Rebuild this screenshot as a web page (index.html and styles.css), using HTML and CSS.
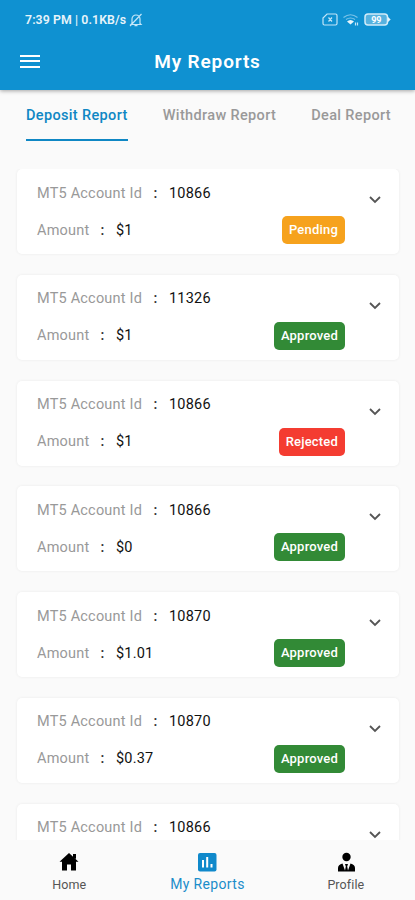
FILE: index.html
```html
<!DOCTYPE html>
<html lang="en">
<head>
  <meta charset="UTF-8">
  <meta name="viewport" content="width=device-width, initial-scale=1.0">
  <title>My Reports</title>
  <link rel="stylesheet" href="styles.css">
</head>
<body>
  <header class="header">
    <div class="status-bar">
      <span class="status-text">7:39 PM | 0.1KB/s</span>
      <svg class="bell" viewBox="0 0 14 14" width="14" height="14">
        <path d="M3 10.5V6a4 4 0 0 1 8 0v4.500l1 1H2zM5.500 12.700h3M1 13L12.500 1"/>
      </svg>
      <div class="status-icons">
        <svg viewBox="0 0 16 13" width="16" height="13">
          <path d="M5 1h8.500a1.500 1.500 0 0 1 1.500 1.500v8a1.500 1.500 0 0 1-1.500 1.500h-11A1.500 1.500 0 0 1 1 10.500V5zM6.500 4.500l3.500 4M10 4.500l-3.500 4"/>
        </svg>
        <svg class="wifi" viewBox="0 0 16 13" width="16" height="13">
          <path class="faint" d="M.5 4.500q7-5.500 14 0M3 6.500q4.500-3 9 0"/>
          <path class="solid" d="M4 8.500q3.500-3 7 0L7.500 11.500z"/>
          <path d="M12.500 9.500v3M14.500 9.500v3"/>
        </svg>
        <svg class="battery" viewBox="0 0 27 13" width="27" height="13">
          <rect x="1" y="1" width="22.500" height="11" rx="3"/>
          <path class="solid" d="M24 4l2.700 2.500L24 9z"/>
          <text x="12.300" y="9.800" text-anchor="middle">99</text>
        </svg>
      </div>
    </div>
    <div class="app-bar">
      <div class="menu"><span></span><span></span><span></span></div>
      <h1>My Reports</h1>
    </div>
  </header>

  <nav class="tabs">
    <span class="tab active">Deposit Report</span>
    <span class="tab">Withdraw Report</span>
    <span class="tab">Deal Report</span>
  </nav>

  <main class="list">
    <div class="card">
      <div class="row"><span class="label">MT5 Account Id</span><span class="colon">:</span><span class="value">10866</span></div>
      <div class="row"><span class="label amount">Amount</span><span class="colon">:</span><span class="value">$1</span><span class="badge pending">Pending</span></div>
      <svg class="chevron" viewBox="0 0 12 8"><path d="M1 1l5 5 5-5"/></svg>
    </div>
    <div class="card">
      <div class="row"><span class="label">MT5 Account Id</span><span class="colon">:</span><span class="value">11326</span></div>
      <div class="row"><span class="label amount">Amount</span><span class="colon">:</span><span class="value">$1</span><span class="badge approved">Approved</span></div>
      <svg class="chevron" viewBox="0 0 12 8"><path d="M1 1l5 5 5-5"/></svg>
    </div>
    <div class="card">
      <div class="row"><span class="label">MT5 Account Id</span><span class="colon">:</span><span class="value">10866</span></div>
      <div class="row"><span class="label amount">Amount</span><span class="colon">:</span><span class="value">$1</span><span class="badge rejected">Rejected</span></div>
      <svg class="chevron" viewBox="0 0 12 8"><path d="M1 1l5 5 5-5"/></svg>
    </div>
    <div class="card">
      <div class="row"><span class="label">MT5 Account Id</span><span class="colon">:</span><span class="value">10866</span></div>
      <div class="row"><span class="label amount">Amount</span><span class="colon">:</span><span class="value">$0</span><span class="badge approved">Approved</span></div>
      <svg class="chevron" viewBox="0 0 12 8"><path d="M1 1l5 5 5-5"/></svg>
    </div>
    <div class="card">
      <div class="row"><span class="label">MT5 Account Id</span><span class="colon">:</span><span class="value">10870</span></div>
      <div class="row"><span class="label amount">Amount</span><span class="colon">:</span><span class="value">$1.01</span><span class="badge approved">Approved</span></div>
      <svg class="chevron" viewBox="0 0 12 8"><path d="M1 1l5 5 5-5"/></svg>
    </div>
    <div class="card">
      <div class="row"><span class="label">MT5 Account Id</span><span class="colon">:</span><span class="value">10870</span></div>
      <div class="row"><span class="label amount">Amount</span><span class="colon">:</span><span class="value">$0.37</span><span class="badge approved">Approved</span></div>
      <svg class="chevron" viewBox="0 0 12 8"><path d="M1 1l5 5 5-5"/></svg>
    </div>
    <div class="card">
      <div class="row"><span class="label">MT5 Account Id</span><span class="colon">:</span><span class="value">10866</span></div>
      <svg class="chevron" viewBox="0 0 12 8"><path d="M1 1l5 5 5-5"/></svg>
    </div>
  </main>

  <footer class="bottom-nav">
    <div class="nav-item">
      <svg viewBox="0 0 20 20" width="20" height="20">
        <path d="M10 1l9.500 8.700h-2.500V18.500h-5v-6H8v6H3V9.700H.5zM14 2h3v5l-3-2z"/>
      </svg>
      <span>Home</span>
    </div>
    <div class="nav-item active">
      <svg viewBox="0 0 20 20" width="20" height="20">
        <rect x="1" y="1" width="18.500" height="18.500" rx="2"/>
        <path class="bars" d="M5 8h2v7.500H5zM9.200 5h2v10.500h-2zM13.500 12h2v3.500h-2z"/>
      </svg>
      <span>My Reports</span>
    </div>
    <div class="nav-item">
      <svg viewBox="0 0 20 20" width="20" height="20">
        <circle cx="10.500" cy="5" r="4.200"/>
        <path d="M2 19.500V16q0-3.200 4.500-4.500l2.500 7 .8-4-.8-2.500h3l-.8 2.500.8 4 2.500-7q4.500 1.300 4.500 4.500v3.500z"/>
      </svg>
      <span>Profile</span>
    </div>
  </footer>
</body>
</html>
```
FILE: styles.css
```css
* { box-sizing: border-box; }
body {
  margin: 0;
  height: 900px;
  display: flex;
  flex-direction: column;
  overflow: hidden;
  background: #fafafa;
  font-family: Roboto, "Liberation Sans", sans-serif;
  color: #111;
}
.header {
  height: 90px;
  flex-shrink: 0;
  background: #0f91d1;
  color: #fff;
  box-shadow: 0 1px 4px rgba(0, 0, 0, 0.35);
}
.status-bar {
  display: flex;
  align-items: center;
  height: 39px;
  padding: 0 24px 0 25px;
}
.status-text { font-size: 12.300px; font-weight: 600; letter-spacing: 0.100px; opacity: 0.9; }
.status-bar svg { fill: none; stroke: #c4e6f8; stroke-width: 1.200; }
.status-bar .bell { margin-left: 3px; }
.status-icons { display: flex; gap: 5px; margin-left: auto; }
.status-icons .faint { stroke: #7cc3e8; }
.status-bar .solid { fill: #e8f5fc; stroke: none; }
.battery rect { fill: #57b2df; stroke: #d2ecf9; stroke-width: 1.500; }
.battery text { fill: #fff; stroke: none; font-size: 9px; font-weight: 700; }
.app-bar {
  display: grid;
  grid-template-columns: 60px 1fr 60px;
  align-items: center;
  height: 44px;
}
.menu { display: flex; flex-direction: column; gap: 3.500px; margin-left: 20px; width: 20px; }
.menu span { height: 2px; background: #fff; }
h1 { margin: 0; text-align: center; font-size: 19px; font-weight: 600; letter-spacing: 0.850px; }

.tabs {
  display: flex;
  justify-content: space-between;
  flex-shrink: 0;
  height: 79px;
  padding: 0 24px 0 26px;
}
.tab {
  height: 51px;
  padding-top: 17px;
  font-size: 14.500px;
  line-height: 18px;
  font-weight: 500;
  letter-spacing: 0.350px;
  color: #999;
}
.tab.active { color: #0f87c4; border-bottom: 2px solid #0f87c4; }

.list {
  flex: 1;
  min-height: 0;
  overflow: hidden;
  padding: 0 16px 0 17px;
}
.card {
  display: grid;
  grid-template-columns: 1fr 20px;
  grid-template-rows: 28px 28px;
  row-gap: 9px;
  height: 85px;
  margin-bottom: 20.800px;
  padding: 10px 14px 10px 20px;
  background: #fff;
  border-radius: 5px;
  box-shadow: 0 0 3px rgba(0, 0, 0, 0.07);
}
.row { grid-column: 1; display: flex; align-items: center; font-size: 14.500px; }
.label { width: 105px; color: #999; letter-spacing: 0.200px; white-space: nowrap; }
.label.amount { width: 52px; }
.colon { width: 27px; text-align: center; font-weight: 500; color: #333; }
.value { letter-spacing: 0.200px; }
.badge {
  margin-left: auto;
  margin-right: 20px;
  padding: 0 7px;
  border-radius: 5px;
  color: #fff;
  font-size: 13px;
  line-height: 28px;
  font-weight: 500;
  letter-spacing: 0.200px;
}
.pending { background: #f6a21d; }
.approved { background: #328a36; }
.rejected { background: #f43c31; }
.chevron {
  grid-column: 2;
  grid-row: 1;
  align-self: end;
  justify-self: center;
  width: 12px;
  height: 8px;
  margin-bottom: 3px;
  fill: none;
  stroke: #555;
  stroke-width: 1.800;
}

.bottom-nav {
  display: grid;
  grid-template-columns: repeat(3, 1fr);
  flex-shrink: 0;
  height: 60px;
  background: #fafafa;
}
.nav-item {
  display: flex;
  flex-direction: column;
  align-items: center;
  padding-top: 12px;
  font-size: 12.500px;
  line-height: 16px;
  letter-spacing: 0.100px;
  color: #555;
}
.nav-item span { margin-top: 5px; }
.nav-item.active { font-size: 14px; letter-spacing: 0.350px; color: #1b8dca; }
.nav-item.active span { margin-top: 4px; }
.nav-item svg { fill: #000; }
.nav-item.active svg { fill: #1089cb; }
.nav-item .bars { fill: #fff; }
```
